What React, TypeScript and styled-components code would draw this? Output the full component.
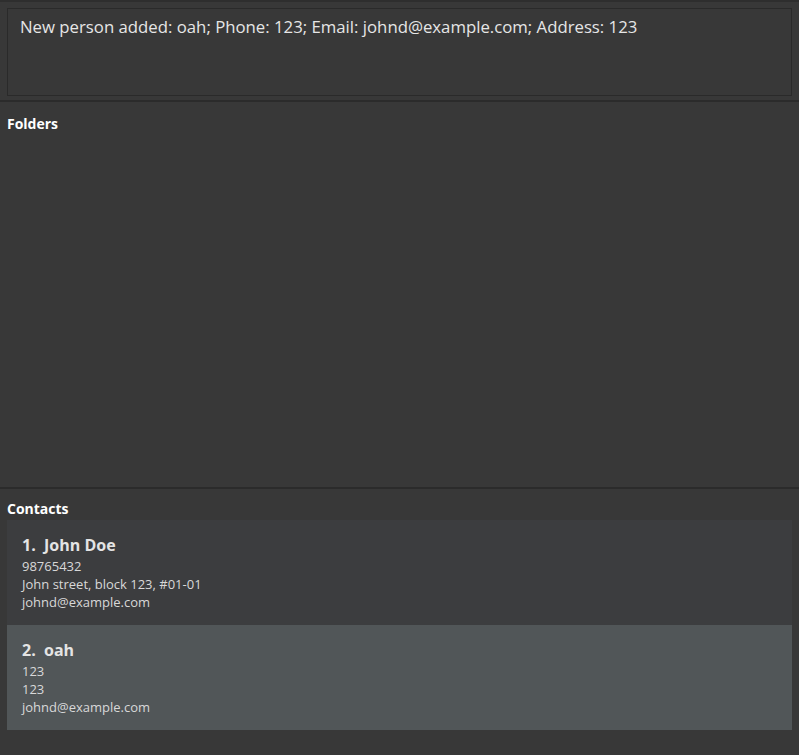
import styled, { createGlobalStyle } from "styled-components";

const GlobalStyle = createGlobalStyle`
  html, body {
    margin: 0;
    padding: 0;
    background: #383838;
    font-family: "Open Sans", "Noto Sans", sans-serif;
  }
`;

const Page = styled.div`
  width: 799px;
  height: 755px;
  display: flex;
  flex-direction: column;
  background: #383838;
  border-top: 2px solid #2e2e2e;
  box-sizing: border-box;
  overflow: hidden;
`;

const ResultPane = styled.div`
  padding: 6px 7px 4px 7px;
  border-bottom: 2px solid #2b2b2b;
`;

const ResultBox = styled.div`
  height: 88px;
  box-sizing: border-box;
  border: 1px solid #2a2a2a;
  background: #383838;
  padding: 7px 12px;
  color: #e6e6e6;
  font-size: 16.75px;
  line-height: 22px;
`;

const Panel = styled.div`
  display: flex;
  flex-direction: column;
  padding: 11px 7px 0 7px;
`;

const FolderPanel = styled(Panel)`
  padding-top: 13px;
  height: 372px;
  border-bottom: 2px solid #2b2b2b;
`;

const ContactPanel = styled(Panel)`
  flex: 1;
`;

const Label = styled.div`
  color: #ffffff;
  font-weight: 700;
  font-size: 14px;
  line-height: 18px;
`;

const List = styled.div`
  margin-top: 2px;
  display: flex;
  flex-direction: column;
`;

const Card = styled.div<{ $alt?: boolean }>`
  height: 105px;
  box-sizing: border-box;
  padding: 14px 15px 0 15px;
  background: ${(p) => (p.$alt ? "#515658" : "#3c3d3f")};
`;

const Name = styled.div`
  color: #e4e4e4;
  font-weight: 700;
  font-size: 16px;
  line-height: 23px;
  white-space: pre;
`;

const Detail = styled.div`
  color: #d8d8d8;
  font-size: 13px;
  line-height: 18px;
`;

const people = [
  {
    name: "John Doe",
    phone: "98765432",
    address: "John street, block 123, #01-01",
    email: "johnd@example.com",
  },
  { name: "oah", phone: "123", address: "123", email: "johnd@example.com" },
];

export default function App() {
  return (
    <>
      <GlobalStyle />
      <Page>
        <ResultPane>
          <ResultBox>
            New person added: oah; Phone: 123; Email: johnd@example.com;
            Address: 123
          </ResultBox>
        </ResultPane>
        <FolderPanel>
          <Label>Folders</Label>
        </FolderPanel>
        <ContactPanel>
          <Label>Contacts</Label>
          <List>
            {people.map((p, i) => (
              <Card key={i} $alt={i % 2 === 1}>
                <Name>{`${i + 1}.  ${p.name}`}</Name>
                <Detail>{p.phone}</Detail>
                <Detail>{p.address}</Detail>
                <Detail>{p.email}</Detail>
              </Card>
            ))}
          </List>
        </ContactPanel>
      </Page>
    </>
  );
}
